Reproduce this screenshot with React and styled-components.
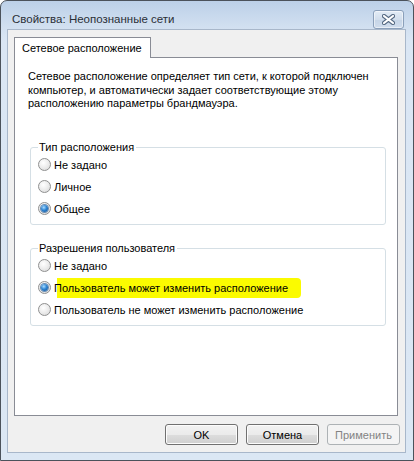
import styled, { createGlobalStyle } from "styled-components";

const Global = createGlobalStyle`
  html, body {
    margin: 0;
    padding: 0;
    background: #ffffff;
  }
  body {
    font-family: "Segoe UI", "Liberation Sans", Arial, sans-serif;
    font-size: 11px;
    color: #000;
  }
`;

const Window = styled.div`
  box-sizing: border-box;
  width: 414px;
  height: 461px;
  display: flex;
  flex-direction: column;
  border: 1px solid #4b525b;
  border-radius: 7px 7px 0 0;
  background: linear-gradient(to bottom, #bcd0e8 0px, #d3e1f1 28px, #dae6f4 40px, #dbe7f4 100%);
  padding: 0 7px 7px 6px;
`;

const TitleBar = styled.div`
  height: 28px;
  display: flex;
  align-items: flex-end;
  justify-content: space-between;
  padding: 0 2px 0 5px;
`;

const Title = styled.span`
  color: #2a2f36;
  font-size: 11.5px;
  line-height: 15px;
  padding-bottom: 2px;
`;

const CloseButton = styled.div`
  box-sizing: border-box;
  width: 31px;
  height: 19px;
  border: 1px solid #8ba0ba;
  border-radius: 3px;
  background: linear-gradient(to bottom, #e3ecf6 0%, #d2deec 50%, #c6d5e7 51%, #d0dded 100%);
  display: flex;
  align-items: center;
  justify-content: center;
  box-shadow: inset 0 0 0 1px rgba(255, 255, 255, 0.5);
`;

const Client = styled.div`
  flex: 1;
  display: flex;
  flex-direction: column;
  background: #f0f0f0;
  border: 1px solid #a8b7ca;
  padding: 7px 7px 7px 6px;
`;

const TabStrip = styled.div`
  display: flex;
`;

const Tab = styled.div`
  position: relative;
  z-index: 1;
  box-sizing: border-box;
  height: 21px;
  margin-bottom: -1px;
  padding: 0 8px 0 7px;
  display: flex;
  align-items: center;
  background: #ffffff;
  border: 1px solid #898c95;
  border-bottom: none;
`;

const Panel = styled.div`
  box-sizing: border-box;
  height: 359px;
  background: #ffffff;
  border: 1px solid #898c95;
  padding: 12px 11px 0 15px;
`;

const Intro = styled.p`
  margin: 0 0 30px -2px;
  line-height: 13.5px;
  white-space: nowrap;
`;

const Group = styled.fieldset`
  margin: 0 0 ${({ $gap }) => $gap || 0}px 0;
  padding: 0 7px 4px 7px;
  border: 1px solid #d5dfe5;
  border-radius: 3px;
  min-width: 0;
`;

const Legend = styled.legend`
  padding: 0 2px 0 1px;
  line-height: 13px;
  color: #000;
`;

const Option = styled.label`
  height: 22px;
  display: flex;
  align-items: center;
  gap: 3px;
  white-space: nowrap;
`;

const Radio = styled.span`
  box-sizing: border-box;
  width: 13px;
  height: 13px;
  border-radius: 50%;
  flex: none;
  border: 1px solid #8f9090;
  background: radial-gradient(circle at 40% 35%, #ffffff 0%, #eeeeee 45%, #d6d6d6 100%);
  display: flex;
  align-items: center;
  justify-content: center;

  &::after {
    content: "";
    width: 7px;
    height: 7px;
    border-radius: 50%;
    display: ${({ $checked }) => ($checked ? "block" : "none")};
    background: radial-gradient(circle at 40% 35%, #a9dcff 0%, #2f85d3 45%, #0f4c8e 100%);
    box-shadow: 0 0 0 1px #6a8db3;
  }
`;

const Highlight = styled.span`
  padding: 4px 13px 4px 0;
  background: linear-gradient(to right, transparent 3px, #fbfb00 3px);
  border-radius: 0 4px 4px 0;
`;

const ButtonRow = styled.div`
  display: flex;
  justify-content: flex-end;
  gap: 8px;
  margin-top: 8px;
  margin-right: -2px;
`;

const Button = styled.div`
  box-sizing: border-box;
  width: 73px;
  height: 21px;
  display: flex;
  align-items: center;
  justify-content: center;
  border-radius: 3px;
  border: 1px solid ${({ $disabled }) => ($disabled ? "#adb2b5" : "#707070")};
  color: ${({ $disabled }) => ($disabled ? "#838383" : "#000")};
  background: ${({ $disabled }) =>
    $disabled
      ? "#f4f4f4"
      : "linear-gradient(to bottom, #f2f2f2 0%, #ebebeb 50%, #dddddd 51%, #cfcfcf 100%)"};
  box-shadow: inset 0 0 0 1px ${({ $disabled }) => ($disabled ? "#f4f4f4" : "#fcfcfc")};
`;

function CloseIcon() {
  return (
    <svg width="13" height="11" viewBox="0 0 13 11">
      <path d="M2 2 L11 9 M11 2 L2 9" stroke="#566a83" strokeWidth="4.2" strokeLinecap="round" fill="none" />
      <path d="M2 2 L11 9 M11 2 L2 9" stroke="#ffffff" strokeWidth="2.2" strokeLinecap="round" fill="none" />
    </svg>
  );
}

function RadioOption({ checked, children }) {
  return (
    <Option>
      <Radio $checked={checked} />
      <span>{children}</span>
    </Option>
  );
}

export default function App() {
  return (
    <>
      <Global />
      <Window>
        <TitleBar>
          <Title>Свойства: Неопознанные сети</Title>
          <CloseButton>
            <CloseIcon />
          </CloseButton>
        </TitleBar>
        <Client>
          <TabStrip>
            <Tab>Сетевое расположение</Tab>
          </TabStrip>
          <Panel>
            <Intro>
              Сетевое расположение определяет тип сети, к которой подключен
              <br />
              компьютер, и автоматически задает соответствующие этому
              <br />
              расположению параметры брандмауэра.
            </Intro>
            <Group $gap={17}>
              <Legend>Тип расположения</Legend>
              <RadioOption>Не задано</RadioOption>
              <RadioOption>Личное</RadioOption>
              <RadioOption checked>Общее</RadioOption>
            </Group>
            <Group>
              <Legend>Разрешения пользователя</Legend>
              <RadioOption>Не задано</RadioOption>
              <RadioOption checked>
                <Highlight>Пользователь может изменить расположение</Highlight>
              </RadioOption>
              <RadioOption>Пользователь не может изменить расположение</RadioOption>
            </Group>
          </Panel>
          <ButtonRow>
            <Button>OK</Button>
            <Button>Отмена</Button>
            <Button $disabled>Применить</Button>
          </ButtonRow>
        </Client>
      </Window>
    </>
  );
}
